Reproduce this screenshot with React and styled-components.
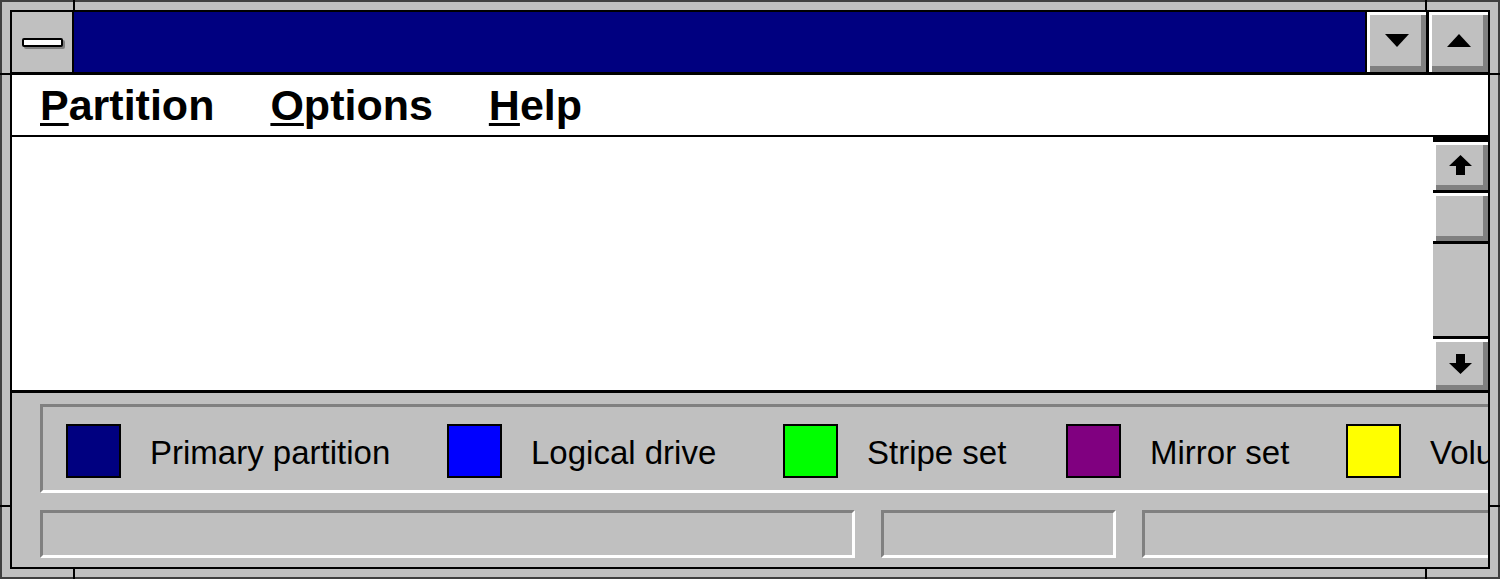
import React from 'react';
import styled, { createGlobalStyle } from 'styled-components';

const GlobalStyle = createGlobalStyle`
  html, body { margin: 0; padding: 0; background: #c0c0c0; }
  body { font-family: "Liberation Sans", Arial, sans-serif; }
`;

const bevel = `box-shadow: inset 3px 3px 0 #ffffff, inset -5px -6px 0 #808080;`;

const Window = styled.div`
  position: relative;
  box-sizing: border-box;
  width: 1500px;
  height: 579px;
  background: #c0c0c0;
  border: 2px solid #404040;
  padding: 8px;
`;

const Tick = styled.div`
  position: absolute;
  background: #000;
  left: ${p => p.$x}px;
  top: ${p => p.$y}px;
  width: ${p => p.$w}px;
  height: ${p => p.$h}px;
`;

const Client = styled.div`
  box-sizing: border-box;
  height: 100%;
  border: 2px solid #000;
  display: flex;
  flex-direction: column;
  overflow: hidden;
  background: #c0c0c0;
`;

const TitleBar = styled.div`
  flex: none;
  display: flex;
  height: 63px;
  box-sizing: border-box;
  border-bottom: 3px solid #000;
`;

const SysMenu = styled.div`
  width: 60px;
  border-right: 2px solid #000;
  background: #c0c0c0;
  display: flex;
  align-items: center;
  justify-content: center;
`;

const SysDash = styled.div`
  width: 37px;
  height: 5px;
  background: #fff;
  border: 2px solid #000;
  border-radius: 2px;
  box-shadow: 2px 2px 0 #808080;
`;

const Caption = styled.div`
  flex: 1;
  background: #000080;
`;

const SizeButton = styled.div`
  width: 59px;
  border-left: ${p => p.$sep}px solid #000;
  background: #c0c0c0;
  ${bevel}
  display: flex;
  align-items: center;
  justify-content: center;
  padding-bottom: 3px;
  box-sizing: content-box;
`;

const MenuBar = styled.div`
  flex: none;
  height: 60px;
  background: #fff;
  border-bottom: 2px solid #000;
  display: flex;
  align-items: center;
  gap: 56px;
  padding-left: 28px;
  font-weight: bold;
  font-size: 43px;
  color: #000;
`;

const MenuItem = styled.span`
  white-space: nowrap;
`;

const Mnemonic = styled.span`
  text-decoration: underline;
  text-decoration-thickness: 3px;
  text-underline-offset: 3px;
`;

const Body = styled.div`
  flex: none;
  display: flex;
  height: 253px;
  border-bottom: 3px solid #000;
`;

const Pane = styled.div`
  flex: 1;
  background: #fff;
`;

const ScrollBar = styled.div`
  width: 55px;
  display: flex;
  flex-direction: column;
  border-top: 5px solid #000;
  background: #c0c0c0;
`;

const ScrollButton = styled.div`
  flex: none;
  height: ${p => p.$h}px;
  background: #c0c0c0;
  box-shadow: inset 3px 3px 0 #ffffff, inset -5px -5px 0 #808080;
  display: flex;
  align-items: center;
  justify-content: center;
  padding-bottom: 2px;
  box-sizing: border-box;
`;

const Thumb = styled.div`
  flex: none;
  height: 48px;
  background: #c0c0c0;
  box-shadow: inset 3px 3px 0 #ffffff, inset -5px -5px 0 #808080;
`;

const Divider = styled.div`
  flex: none;
  height: 3px;
  background: #000;
`;

const Track = styled.div`
  flex: 1;
  background: #c0c0c0;
`;

const Footer = styled.div`
  flex: 1;
  display: flex;
  flex-direction: column;
  padding: 11px 0 0 28px;
  gap: 17px;
`;

const Legend = styled.div`
  flex: none;
  box-sizing: border-box;
  width: 1600px;
  height: 89px;
  border-top: 3px solid #808080;
  border-left: 3px solid #808080;
  border-bottom: 3px solid #fff;
  border-right: 3px solid #fff;
  display: flex;
  align-items: center;
  padding: 4px 0 0 23px;
`;

const LegendItem = styled.div`
  flex: none;
  width: ${p => p.$w}px;
  display: flex;
  align-items: center;
  gap: 29px;
`;

const Swatch = styled.div`
  flex: none;
  box-sizing: border-box;
  width: 55px;
  height: 54px;
  border: 2px solid #000;
  background: ${p => p.$color};
`;

const LegendLabel = styled.span`
  font-size: 33px;
  color: #000;
  white-space: nowrap;
  padding-top: 5px;
`;

const StatusBar = styled.div`
  flex: none;
  display: flex;
  gap: 26px;
  height: 48px;
`;

const StatusPanel = styled.div`
  flex: none;
  box-sizing: border-box;
  width: ${p => p.$w}px;
  height: 48px;
  border-top: 3px solid #808080;
  border-left: 3px solid #808080;
  border-bottom: 3px solid #fff;
  border-right: 3px solid #fff;
`;

const legend = [
  { color: '#000080', label: 'Primary partition', w: 381 },
  { color: '#0000ff', label: 'Logical drive', w: 336 },
  { color: '#00ff00', label: 'Stripe set', w: 283 },
  { color: '#800080', label: 'Mirror set', w: 280 },
  { color: '#ffff00', label: 'Volume set', w: 320 },
];

const ticks = [
  { x: 71, y: -2, w: 2, h: 12 },
  { x: 1423, y: -2, w: 2, h: 12 },
  { x: 71, y: 565, w: 2, h: 12 },
  { x: 1423, y: 565, w: 2, h: 12 },
  { x: -2, y: 71, w: 12, h: 2 },
  { x: -2, y: 503, w: 12, h: 2 },
  { x: 1486, y: 71, w: 12, h: 2 },
  { x: 1486, y: 503, w: 12, h: 2 },
];

const Triangle = ({ up }) => (
  <svg width="24" height="13" viewBox="0 0 24 13">
    <polygon points={up ? '12,0 24,13 0,13' : '0,0 24,0 12,13'} fill="#000" />
  </svg>
);

const Arrow = ({ up }) => (
  <svg width="23" height="20" viewBox="0 0 23 20">
    <polygon
      points={up ? '11.5,0 23,11 16,11 16,20 7,20 7,11 0,11' : '7,0 16,0 16,9 23,9 11.5,20 0,9 7,9'}
      fill="#000"
    />
  </svg>
);

const App = () => (
  <>
    <GlobalStyle />
    <Window>
      {ticks.map((t, i) => (
        <Tick key={i} $x={t.x} $y={t.y} $w={t.w} $h={t.h} />
      ))}
      <Client>
        <TitleBar>
          <SysMenu><SysDash /></SysMenu>
          <Caption />
          <SizeButton $sep={2}><Triangle /></SizeButton>
          <SizeButton $sep={3}><Triangle up /></SizeButton>
        </TitleBar>
        <MenuBar>
          <MenuItem><Mnemonic>P</Mnemonic>artition</MenuItem>
          <MenuItem><Mnemonic>O</Mnemonic>ptions</MenuItem>
          <MenuItem><Mnemonic>H</Mnemonic>elp</MenuItem>
        </MenuBar>
        <Body>
          <Pane />
          <ScrollBar>
            <ScrollButton $h={48}><Arrow up /></ScrollButton>
            <Divider />
            <Thumb />
            <Divider />
            <Track />
            <Divider />
            <ScrollButton $h={51}><Arrow /></ScrollButton>
          </ScrollBar>
        </Body>
        <Footer>
          <Legend>
            {legend.map(item => (
              <LegendItem key={item.label} $w={item.w}>
                <Swatch $color={item.color} />
                <LegendLabel>{item.label}</LegendLabel>
              </LegendItem>
            ))}
          </Legend>
          <StatusBar>
            <StatusPanel $w={815} />
            <StatusPanel $w={235} />
            <StatusPanel $w={500} />
          </StatusBar>
        </Footer>
      </Client>
    </Window>
  </>
);

export default App;
